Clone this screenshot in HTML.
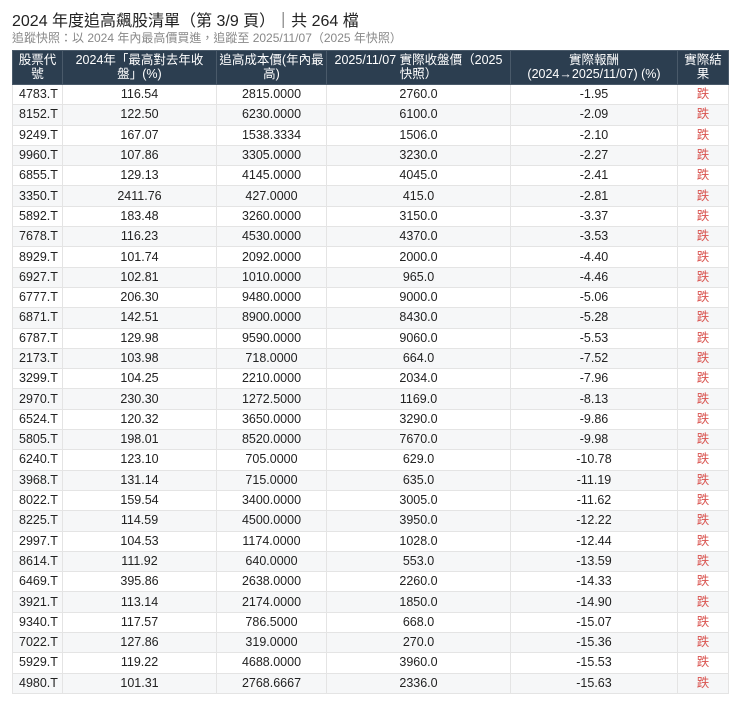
<!DOCTYPE html>
<html><head><meta charset="utf-8"><style>
body{margin:0;background:#fff;font-family:"Liberation Sans","Noto Sans CJK TC",sans-serif;color:#222}
h1{position:absolute;left:12px;top:7px;margin:0;font-size:16px;font-weight:normal;color:#222}
.sub{position:absolute;left:12px;top:29px;font-size:12px;color:#888}
table{position:absolute;left:12px;top:50px;border-collapse:collapse;width:716px;font-size:12.5px;table-layout:fixed}
th{background:#2c3e50;color:#fff;font-weight:normal;font-size:12.5px;line-height:13.5px;height:33px;padding:0 2px;border:1px solid #4a5a6a;text-align:center;white-space:nowrap}
td{height:19.3px;padding:0;border:1px solid #e4e4e4;text-align:center;line-height:19px}
td:first-child{text-align:left;padding-left:6px}
tr:nth-child(even) td{background:#f6f7f8}
td.r{color:#d9534f}
</style></head><body>
<h1>2024 年度追高飆股清單（第 3/9 頁）｜共 264 檔</h1>
<div class="sub">追蹤快照：以 2024 年內最高價買進，追蹤至 2025/11/07（2025 年快照）</div>
<table>
<colgroup><col style="width:50px"><col style="width:154px"><col style="width:110px"><col style="width:184px"><col style="width:167px"><col style="width:51px"></colgroup>
<thead><tr><th>股票代<br>號</th><th>2024年「最高對去年收<br>盤」(%)</th><th>追高成本價(年內最<br>高)</th><th>2025/11/07 實際收盤價（2025<br>快照）</th><th>實際報酬<br>(2024→2025/11/07) (%)</th><th>實際結<br>果</th></tr></thead>
<tbody>
<tr><td>4783.T</td><td>116.54</td><td>2815.0000</td><td>2760.0</td><td>-1.95</td><td class="r">跌</td></tr>
<tr><td>8152.T</td><td>122.50</td><td>6230.0000</td><td>6100.0</td><td>-2.09</td><td class="r">跌</td></tr>
<tr><td>9249.T</td><td>167.07</td><td>1538.3334</td><td>1506.0</td><td>-2.10</td><td class="r">跌</td></tr>
<tr><td>9960.T</td><td>107.86</td><td>3305.0000</td><td>3230.0</td><td>-2.27</td><td class="r">跌</td></tr>
<tr><td>6855.T</td><td>129.13</td><td>4145.0000</td><td>4045.0</td><td>-2.41</td><td class="r">跌</td></tr>
<tr><td>3350.T</td><td>2411.76</td><td>427.0000</td><td>415.0</td><td>-2.81</td><td class="r">跌</td></tr>
<tr><td>5892.T</td><td>183.48</td><td>3260.0000</td><td>3150.0</td><td>-3.37</td><td class="r">跌</td></tr>
<tr><td>7678.T</td><td>116.23</td><td>4530.0000</td><td>4370.0</td><td>-3.53</td><td class="r">跌</td></tr>
<tr><td>8929.T</td><td>101.74</td><td>2092.0000</td><td>2000.0</td><td>-4.40</td><td class="r">跌</td></tr>
<tr><td>6927.T</td><td>102.81</td><td>1010.0000</td><td>965.0</td><td>-4.46</td><td class="r">跌</td></tr>
<tr><td>6777.T</td><td>206.30</td><td>9480.0000</td><td>9000.0</td><td>-5.06</td><td class="r">跌</td></tr>
<tr><td>6871.T</td><td>142.51</td><td>8900.0000</td><td>8430.0</td><td>-5.28</td><td class="r">跌</td></tr>
<tr><td>6787.T</td><td>129.98</td><td>9590.0000</td><td>9060.0</td><td>-5.53</td><td class="r">跌</td></tr>
<tr><td>2173.T</td><td>103.98</td><td>718.0000</td><td>664.0</td><td>-7.52</td><td class="r">跌</td></tr>
<tr><td>3299.T</td><td>104.25</td><td>2210.0000</td><td>2034.0</td><td>-7.96</td><td class="r">跌</td></tr>
<tr><td>2970.T</td><td>230.30</td><td>1272.5000</td><td>1169.0</td><td>-8.13</td><td class="r">跌</td></tr>
<tr><td>6524.T</td><td>120.32</td><td>3650.0000</td><td>3290.0</td><td>-9.86</td><td class="r">跌</td></tr>
<tr><td>5805.T</td><td>198.01</td><td>8520.0000</td><td>7670.0</td><td>-9.98</td><td class="r">跌</td></tr>
<tr><td>6240.T</td><td>123.10</td><td>705.0000</td><td>629.0</td><td>-10.78</td><td class="r">跌</td></tr>
<tr><td>3968.T</td><td>131.14</td><td>715.0000</td><td>635.0</td><td>-11.19</td><td class="r">跌</td></tr>
<tr><td>8022.T</td><td>159.54</td><td>3400.0000</td><td>3005.0</td><td>-11.62</td><td class="r">跌</td></tr>
<tr><td>8225.T</td><td>114.59</td><td>4500.0000</td><td>3950.0</td><td>-12.22</td><td class="r">跌</td></tr>
<tr><td>2997.T</td><td>104.53</td><td>1174.0000</td><td>1028.0</td><td>-12.44</td><td class="r">跌</td></tr>
<tr><td>8614.T</td><td>111.92</td><td>640.0000</td><td>553.0</td><td>-13.59</td><td class="r">跌</td></tr>
<tr><td>6469.T</td><td>395.86</td><td>2638.0000</td><td>2260.0</td><td>-14.33</td><td class="r">跌</td></tr>
<tr><td>3921.T</td><td>113.14</td><td>2174.0000</td><td>1850.0</td><td>-14.90</td><td class="r">跌</td></tr>
<tr><td>9340.T</td><td>117.57</td><td>786.5000</td><td>668.0</td><td>-15.07</td><td class="r">跌</td></tr>
<tr><td>7022.T</td><td>127.86</td><td>319.0000</td><td>270.0</td><td>-15.36</td><td class="r">跌</td></tr>
<tr><td>5929.T</td><td>119.22</td><td>4688.0000</td><td>3960.0</td><td>-15.53</td><td class="r">跌</td></tr>
<tr><td>4980.T</td><td>101.31</td><td>2768.6667</td><td>2336.0</td><td>-15.63</td><td class="r">跌</td></tr>
</tbody></table>
</body></html>
